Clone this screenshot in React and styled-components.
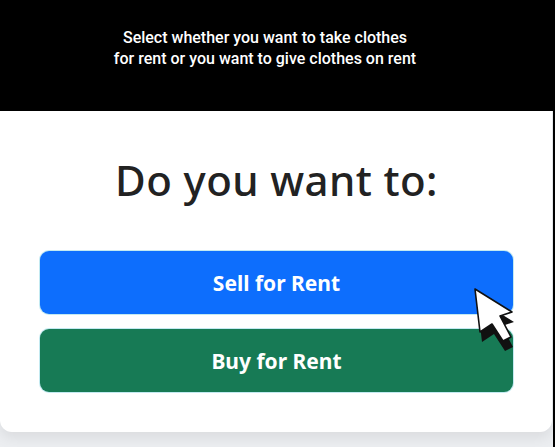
import React from 'react';
import styled, { createGlobalStyle } from 'styled-components';

const GlobalStyle = createGlobalStyle`
    html, body {
        margin: 0;
        padding: 0;
        background: #eceef1;
    }
    body {
        width: 555px;
        height: 447px;
        overflow: hidden;
    }
`;

function Cursor() {
    const arrow = '5,5 10,48 22,40 33,57 41,53 30,32 42,28';
    return (
        <CursorSvg width="60" height="75" viewBox="0 0 60 75">
            <polygon points={arrow} transform="translate(2,10)" fill="#111" />
            <polygon points={arrow} fill="#fff" stroke="#111" strokeWidth="1.6" strokeLinejoin="round" />
        </CursorSvg>
    );
}

export default function App() {
    return (
        <>
            <GlobalStyle />
            <Page>
                <Caption>
                    Select whether you want to take clothes
                    <br />
                    for rent or you want to give clothes on rent
                </Caption>
                <Stage>
                    <Card>
                        <Title>Do you want to:</Title>
                        <Actions>
                            <ChoiceButton $tone="#0d6efd">Sell for Rent</ChoiceButton>
                            <ChoiceButton $tone="#177a55">Buy for Rent</ChoiceButton>
                            <Cursor />
                        </Actions>
                    </Card>
                </Stage>
            </Page>
        </>
    );
}

const Page = styled.div`
    display: flex;
    flex-direction: column;
    width: 555px;
    height: 447px;
`;

const Caption = styled.div`
    height: 111px;
    background: #000;
    color: #fff;
    font-family: Roboto, 'Liberation Sans', sans-serif;
    font-weight: 500;
    font-size: 16px;
    line-height: 21px;
    text-align: center;
    padding: 27px 25px 0 0;
    box-sizing: border-box;
`;

const Stage = styled.div`
    flex: 1;
    display: flex;
    background: #eceef1;
    border-right: 2px solid #000;
`;

const Card = styled.div`
    width: 552px;
    height: 321px;
    box-sizing: border-box;
    background: #fff;
    border-radius: 0 0 12px 12px;
    box-shadow: 0 6px 14px rgba(0, 0, 0, 0.08);
    padding: 0 39px 0 40px;
    display: flex;
    flex-direction: column;
`;

const Title = styled.h1`
    margin: 41px 0 0;
    font-family: 'Noto Sans', 'Open Sans', sans-serif;
    font-weight: 500;
    font-size: 42px;
    line-height: 56px;
    color: #222;
    text-align: center;
    letter-spacing: 0.4px;
`;

const Actions = styled.div`
    position: relative;
    margin-top: 43px;
    display: flex;
    flex-direction: column;
    gap: 15px;
`;

const ChoiceButton = styled.button`
    height: 63px;
    border: 0;
    border-radius: 9px;
    background: ${(p) => p.$tone};
    color: #fff;
    font-family: 'Noto Sans', 'Open Sans', sans-serif;
    font-weight: 700;
    font-size: 21px;
    box-shadow: 0 0 0 1px rgba(170, 225, 235, 0.7);
    cursor: pointer;
`;

const CursorSvg = styled.svg`
    position: absolute;
    left: 430px;
    top: 33px;
`;
